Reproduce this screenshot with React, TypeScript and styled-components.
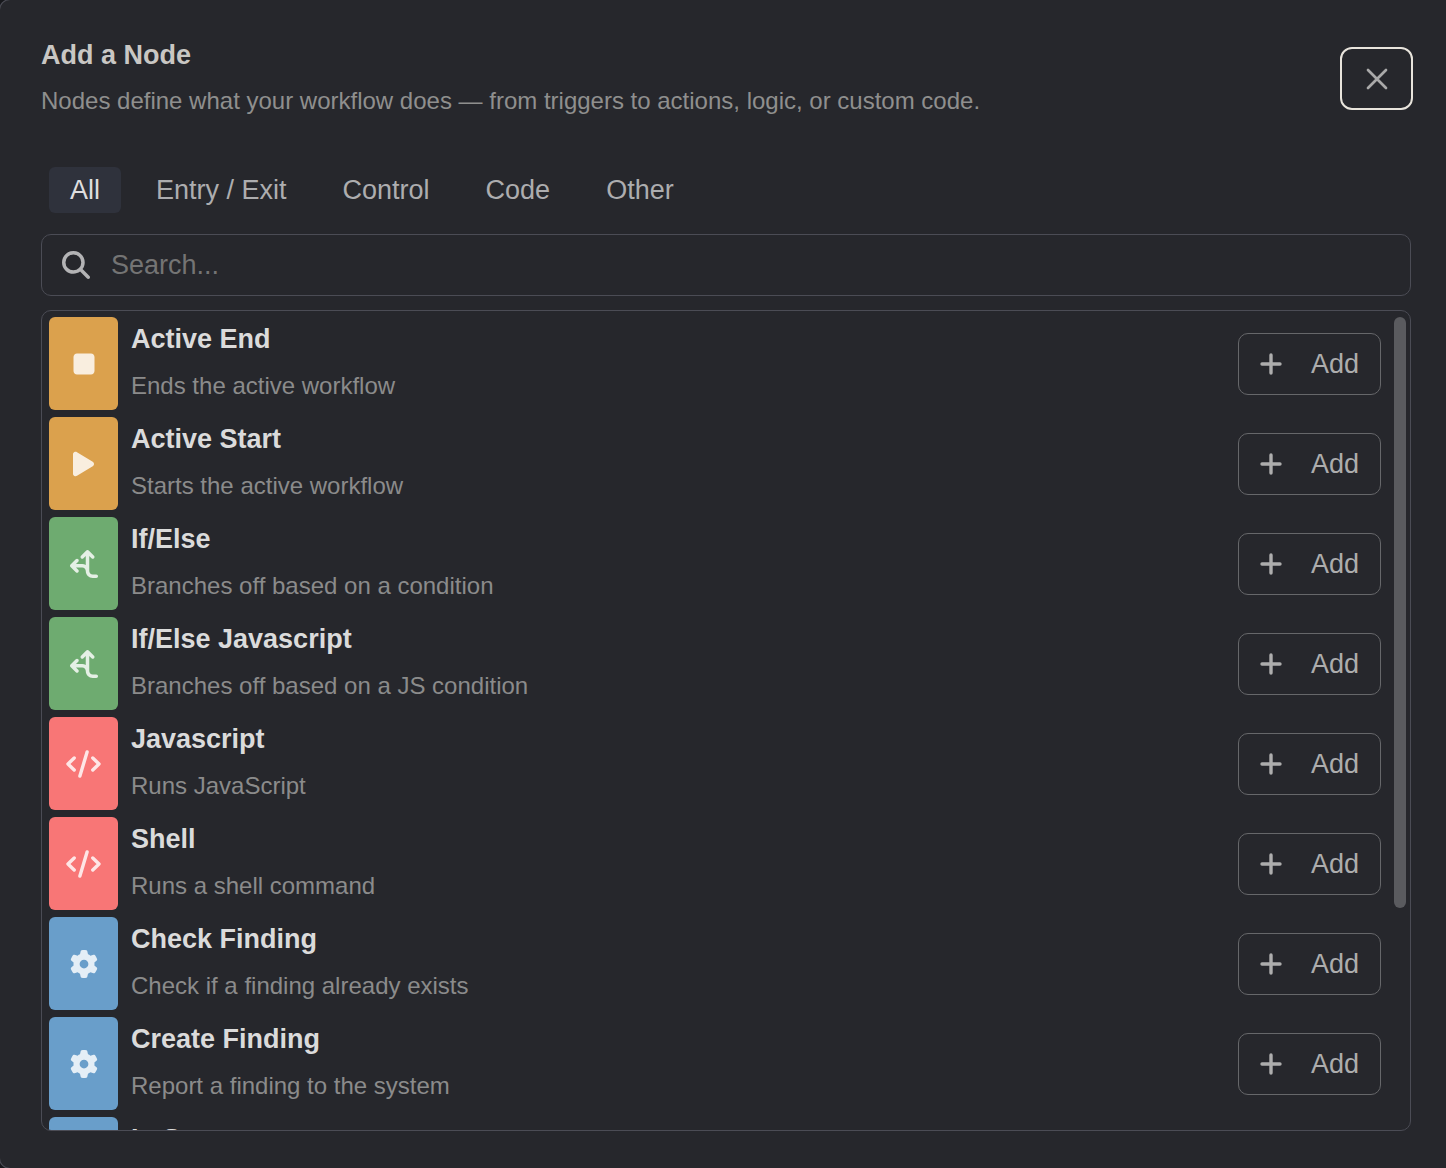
import React, { useState } from "react";
import styled, { createGlobalStyle } from "styled-components";
import { FaArrowsSplitUpAndLeft, FaGear, FaMagnifyingGlass, FaStop } from "react-icons/fa6";

const GlobalStyle = createGlobalStyle`
  *, *::before, *::after { box-sizing: border-box; }
  body {
    margin: 0;
    background: #17181c;
    font-family: "Liberation Sans", Arial, sans-serif;
  }
  button, input { font: inherit; }
`;

const Dialog = styled.main`
  display: flex;
  flex-direction: column;
  height: 100vh;
  padding: 37px 35px 37px 41px;
  border-radius: 10px 0 0 10px;
  background: #26272c;
  box-shadow: 0 0 0 1px #4b4c55;
  overflow: hidden;
`;

const Header = styled.header`
  display: flex;
  justify-content: space-between;
  align-items: center;
  height: 83px;
  margin-right: -2px;
`;

const Heading = styled.div`
  display: flex;
  flex-direction: column;
  align-self: flex-start;
  gap: 10px;
`;

const Title = styled.h1`
  margin: 0;
  color: #c9c7c4;
  font-size: 27px;
  line-height: 36px;
`;

const Subtitle = styled.p`
  margin: 0;
  color: #8f8f8e;
  font-size: 24px;
  line-height: 36px;
`;

const CloseButton = styled.button`
  display: grid;
  place-items: center;
  width: 73px;
  height: 63px;
  padding: 0;
  border: 2px solid #e8e4dc;
  border-radius: 12px;
  background: transparent;
  color: #a9a9a9;
`;

const Tabs = styled.nav`
  display: flex;
  gap: 14px;
  margin: 47px 0 21px;
  padding-left: 8px;
`;

const Tab = styled.button<{ $active: boolean }>`
  height: 46px;
  padding: 0 21px;
  border: 0;
  border-radius: 6px;
  background: ${(p) => (p.$active ? "#2f323c" : "transparent")};
  color: ${(p) => (p.$active ? "#dededf" : "#adadaf")};
  font-size: 27px;
  line-height: 46px;
`;

const SearchBox = styled.label`
  display: flex;
  align-items: center;
  flex: none;
  gap: 21px;
  height: 62px;
  padding: 0 20px;
  border: 1px solid #4b4c55;
  border-radius: 10px;
  color: #b3b3b5;

  svg {
    flex: none;
    width: 28px;
    height: 28px;
  }
`;

const SearchInput = styled.input`
  flex: 1;
  min-width: 0;
  padding: 0;
  border: 0;
  outline: 0;
  background: transparent;
  color: #dededf;
  font-size: 27px;

  &::placeholder {
    color: #747474;
    opacity: 1;
  }
`;

const Panel = styled.section`
  display: flex;
  flex: 1;
  gap: 13px;
  min-height: 0;
  margin-top: 14px;
  padding: 6px 4px 0 7px;
  border: 1px solid #4b4c55;
  border-radius: 10px;
  overflow: hidden;
`;

const NodeList = styled.ul`
  display: flex;
  flex: 1;
  flex-direction: column;
  gap: 7px;
  min-width: 0;
  margin: 0;
  padding: 0;
  overflow: hidden;
  list-style: none;
`;

const ScrollThumb = styled.div`
  flex: none;
  width: 12px;
  height: 591px;
  max-height: 73%;
  border-radius: 6px;
  background: #5a5b5f;
`;

const Row = styled.li`
  display: flex;
  flex: none;
  align-items: center;
  gap: 13px;
  height: 93px;
`;

const Tile = styled.div<{ $color: string }>`
  display: grid;
  place-items: center;
  flex: none;
  width: 69px;
  height: 93px;
  border-radius: 6px;
  background: ${(p) => p.$color};
  color: rgba(255, 255, 255, 0.82);

  svg {
    width: auto;
    height: 28px;
  }
`;

const Details = styled.div`
  display: flex;
  flex: 1;
  flex-direction: column;
  align-self: flex-start;
  gap: 11px;
  min-width: 0;
  padding-top: 4px;
`;

const NodeName = styled.h2`
  margin: 0;
  color: #dbdbdb;
  font-size: 27px;
  line-height: 36px;
`;

const NodeDescription = styled.p`
  margin: 0;
  color: #8b8b8b;
  font-size: 24px;
  line-height: 36px;
`;

const AddButton = styled.button`
  display: flex;
  align-items: center;
  justify-content: space-between;
  flex: none;
  width: 143px;
  height: 62px;
  padding: 0 21px;
  border: 1px solid #66676a;
  border-radius: 10px;
  background: transparent;
  color: #adadad;
  font-size: 27px;
  line-height: 32px;
`;

const PlayIcon = () => (
  <svg viewBox="0 0 384 512" fill="currentColor" aria-hidden>
    <path d="M73 39c-14.800-9.100-33.400-9.400-48.500-.9S0 62.600 0 80V432c0 17.400 9.400 33.400 24.500 41.900s33.700 8.100 48.500-.9L361 297c14.300-8.700 23-24.200 23-41s-8.700-32.200-23-41L73 39z" />
  </svg>
);

const CodeIcon = () => (
  <svg viewBox="0 0 35 28" fill="none" stroke="currentColor" strokeWidth="3.4" strokeLinecap="round" strokeLinejoin="round" aria-hidden>
    <path d="M8.200 8L2 14L8.200 20M21.100 2L13.900 26M26.800 8L33 14L26.800 20" />
  </svg>
);

const PlusIcon = () => (
  <svg width="22" height="22" viewBox="0 0 22 22" fill="none" stroke="currentColor" strokeWidth="3.4" strokeLinecap="round" aria-hidden>
    <path d="M11 2V20M2 11H20" />
  </svg>
);

const CloseIcon = () => (
  <svg width="22" height="22" viewBox="0 0 22 22" fill="none" stroke="currentColor" strokeWidth="2.7" strokeLinecap="round" aria-hidden>
    <path d="M2 2L20 20M20 2L2 20" />
  </svg>
);

const categories = ["All", "Entry / Exit", "Control", "Code", "Other"];

const kinds = {
  end: { color: "#dba14d", Icon: FaStop },
  start: { color: "#dba14d", Icon: PlayIcon },
  control: { color: "#6eab70", Icon: FaArrowsSplitUpAndLeft },
  code: { color: "#f87676", Icon: CodeIcon },
  other: { color: "#699eca", Icon: FaGear },
};

const nodes: { name: string; description?: string; kind: keyof typeof kinds }[] = [
  { name: "Active End", description: "Ends the active workflow", kind: "end" },
  { name: "Active Start", description: "Starts the active workflow", kind: "start" },
  { name: "If/Else", description: "Branches off based on a condition", kind: "control" },
  { name: "If/Else Javascript", description: "Branches off based on a JS condition", kind: "control" },
  { name: "Javascript", description: "Runs JavaScript", kind: "code" },
  { name: "Shell", description: "Runs a shell command", kind: "code" },
  { name: "Check Finding", description: "Check if a finding already exists", kind: "other" },
  { name: "Create Finding", description: "Report a finding to the system", kind: "other" },
  { name: "In Scope", kind: "other" },
];

export default function App() {
  const [active, setActive] = useState("All");
  return (
    <>
      <GlobalStyle />
      <Dialog>
        <Header>
          <Heading>
            <Title>Add a Node</Title>
            <Subtitle>
              Nodes define what your workflow does — from triggers to actions, logic, or custom code.
            </Subtitle>
          </Heading>
          <CloseButton aria-label="Close">
            <CloseIcon />
          </CloseButton>
        </Header>
        <Tabs>
          {categories.map((name) => (
            <Tab key={name} $active={name === active} onClick={() => setActive(name)}>
              {name}
            </Tab>
          ))}
        </Tabs>
        <SearchBox>
          <FaMagnifyingGlass aria-hidden />
          <SearchInput type="text" placeholder="Search..." aria-label="Search nodes" />
        </SearchBox>
        <Panel>
          <NodeList>
            {nodes.map(({ name, description, kind }) => {
              const { color, Icon } = kinds[kind];
              return (
                <Row key={name}>
                  <Tile $color={color}>
                    <Icon aria-hidden />
                  </Tile>
                  <Details>
                    <NodeName>{name}</NodeName>
                    {description && <NodeDescription>{description}</NodeDescription>}
                  </Details>
                  <AddButton>
                    <PlusIcon />
                    Add
                  </AddButton>
                </Row>
              );
            })}
          </NodeList>
          <ScrollThumb />
        </Panel>
      </Dialog>
    </>
  );
}
